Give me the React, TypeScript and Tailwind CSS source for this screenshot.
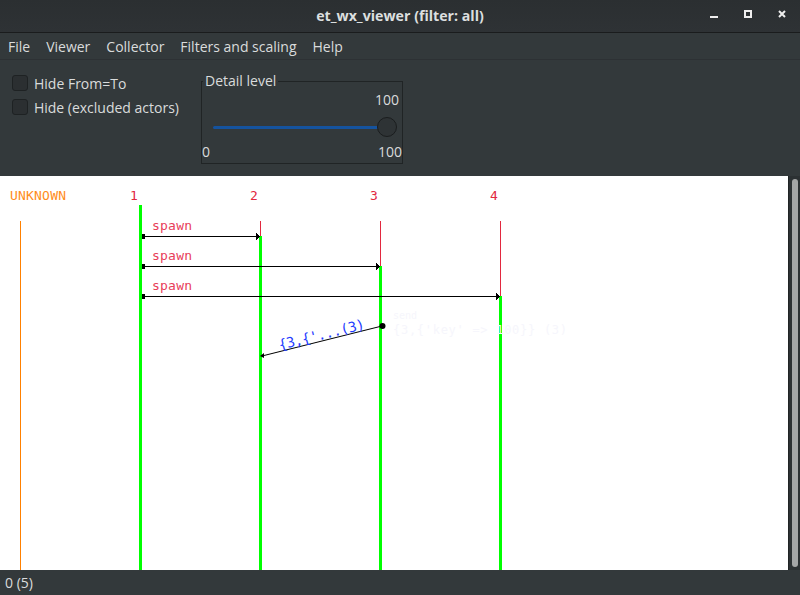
const ui = { fontFamily: '"Open Sans", "Noto Sans", sans-serif' };

const actors = [
  { label: "1", x: 140, greenFrom: 205 },
  { label: "2", x: 260, greenFrom: 236 },
  { label: "3", x: 380, greenFrom: 266 },
  { label: "4", x: 500, greenFrom: 296 },
];

function TitleBar() {
  return (
    <div className="relative flex h-[33px] shrink-0 items-center justify-center border-b border-[#1a1c1d] bg-gradient-to-b from-[#2b2f31] to-[#2e3235]">
      <span className="text-[14.2px] font-bold text-[#dcdfdf]">et_wx_viewer (filter: all)</span>
      <div className="absolute inset-y-0 right-0 flex items-center">
        <svg width="120" height="32" viewBox="680 0 120 32" fill="none">
          <rect x="710" y="16" width="8" height="2" fill="#eeeeee" />
          <rect x="745" y="11" width="6" height="6" stroke="#eeeeee" strokeWidth="2" />
          <path d="M779 11l6 6M785 11l-6 6" stroke="#eeeeee" strokeWidth="2" />
        </svg>
      </div>
    </div>
  );
}

function MenuBar() {
  return (
    <div className="flex h-[27px] shrink-0 items-center gap-4 border-b border-[#2d3134] bg-[#33393b] pl-2 text-[14px] text-[#dadcdc]">
      <span>File</span>
      <span>Viewer</span>
      <span>Collector</span>
      <span>Filters and scaling</span>
      <span>Help</span>
    </div>
  );
}

function Check({ label }: { label: string }) {
  return (
    <div className="flex h-6 items-center gap-[6px] whitespace-nowrap text-[14px] text-[#dadcdc]">
      <span className="h-4 w-4 rounded-[3px] border border-[#1e2223] bg-[#2b2f31]" />
      <span>{label}</span>
    </div>
  );
}

function DetailLevel() {
  return (
    <div className="relative mt-[10px] h-[83px] w-[202px] border border-[#202425]">
      <span className="absolute -top-[10px] left-[1px] bg-[#33393b] px-[2px] text-[14px] leading-[18px] text-[#dadcdc]">
        Detail level
      </span>
      <div className="flex h-full flex-col">
        <div className="mt-[8px] pr-[3px] text-right text-[14px] leading-5 text-[#dadcdc]">100</div>
        <div className="mt-[7px] flex h-5 items-center pl-[11px] pr-[5px]">
          <div className="h-[3px] flex-1 rounded-l-sm bg-[#15539e]" />
          <div className="-ml-[1px] h-5 w-5 rounded-full border border-[#1a1d1e] bg-[#2e3335]" />
        </div>
        <div className="mt-[5px] flex justify-between text-[14px] leading-5 text-[#dadcdc]">
          <span>0</span>
          <span>100</span>
        </div>
      </div>
    </div>
  );
}

function Toolbar() {
  return (
    <div className="flex h-[116px] shrink-0 gap-[22px] bg-[#33393b] pl-3 pt-[11px]">
      <div className="flex w-[167px] flex-col">
        <Check label="Hide From=To" />
        <Check label="Hide (excluded actors)" />
      </div>
      <DetailLevel />
    </div>
  );
}

function Chart() {
  return (
    <svg
      width="788"
      height="394"
      viewBox="0 176 788 394"
      className="block [shape-rendering:crispEdges]"
      style={{ fontFamily: '"DejaVu Sans Mono", monospace' }}
    >
      <text x="10" y="200" fontSize="13" textLength="56" fill="#ff8c1a">UNKNOWN</text>
      <rect x="20" y="221" width="1" height="349" fill="#ff8000" />
      {actors.map((a) => (
        <g key={a.label}>
          <text x={a.x - 10} y="200" fontSize="13" fill="#e2283f">{a.label}</text>
          <rect x={a.x} y="221" width="1" height={a.greenFrom - 221} fill="#e2283f" />
          <rect x={a.x - 1} y={a.greenFrom} width="3" height={570 - a.greenFrom} fill="#00ff00" />
        </g>
      ))}
      {[260, 380, 500].map((end, i) => {
        const y = 236 + i * 30;
        return (
          <g key={end}>
            <text x="152" y={y - 6} fontSize="13" textLength="40" fill="#e8405a">spawn</text>
            <rect x="142" y={y} width={end - 142} height="1" fill="#000" />
            <rect x="142" y={y - 2} width="3" height="5" fill="#000" />
            <path d={`M${end - 4} ${y - 3}L${end} ${y + 0.5}L${end - 4} ${y + 4}Z`} fill="#000" />
          </g>
        );
      })}
      <line x1="382" y1="326" x2="262" y2="356" stroke="#000" strokeWidth="1" shapeRendering="auto" />
      <circle cx="382.5" cy="326" r="3" fill="#000" shapeRendering="auto" />
      <path d="M260 356l4-3v5z" fill="#000" shapeRendering="auto" />
      <text
        x="280"
        y="350"
        fontSize="14"
        textLength="88"
        fill="#1f3cff"
        transform="rotate(-14 280 350)"
      >
        {"{3,{'...(3)"}
      </text>
      <text x="393" y="319" fontSize="10" fill="#f6f6fc">send</text>
      <text x="393" y="334" fontSize="12" textLength="174" fill="#f6f6fc">{"{3,{'key' => 100}} (3)"}</text>
    </svg>
  );
}

function Scrollbar() {
  return (
    <div className="flex w-3 shrink-0 justify-center border-l border-[#202425] bg-[#2c3133] py-[3px]">
      <div className="ml-[1px] w-[6px] rounded-[3px] bg-[#a4a6a6]" />
    </div>
  );
}

export default function App() {
  return (
    <div className="flex h-[595px] w-[800px] flex-col overflow-hidden bg-[#33393b]" style={ui}>
      <TitleBar />
      <MenuBar />
      <Toolbar />
      <div className="flex h-[394px] shrink-0">
        <div className="w-[788px] bg-white">
          <Chart />
        </div>
        <Scrollbar />
      </div>
      <div className="flex h-[25px] shrink-0 items-center pl-[5px] text-[14px] text-[#dadcdc]">0 (5)</div>
    </div>
  );
}
